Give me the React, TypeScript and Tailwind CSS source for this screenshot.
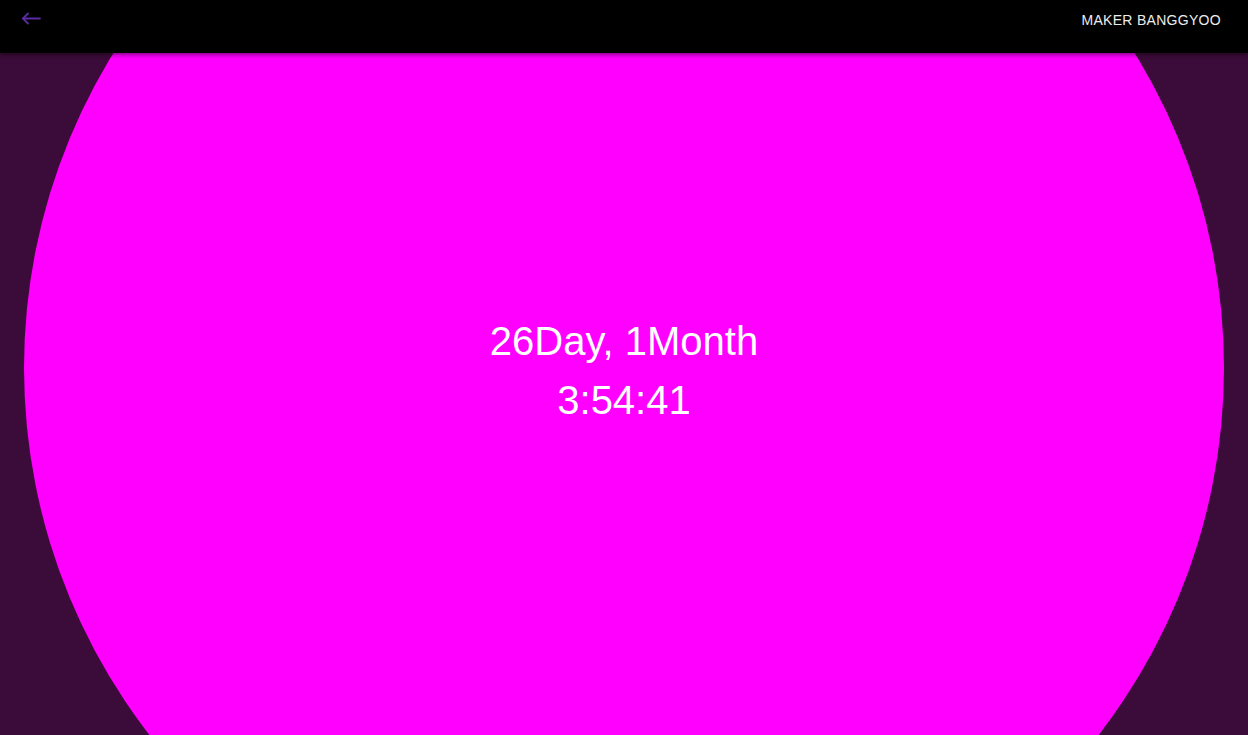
export default function App() {
  return (
    <div className="relative h-screen w-full overflow-hidden bg-[#3b0b39] font-['Liberation_Sans',Arial,sans-serif]">
      {/* App bar */}
      <header className="absolute inset-x-0 top-0 z-10 flex h-[53px] items-start justify-between bg-black pl-[21px] pr-[27px] shadow-[0_2px_4px_rgba(0,0,0,0.45)]">
        <button className="mt-[12px] text-[#5b2ca0]">
          <svg width="20" height="13" viewBox="0 0 20 13" fill="none" stroke="currentColor" strokeWidth="1.8" strokeLinecap="round" strokeLinejoin="round">
            <path d="M19 6.5H2" />
            <path d="M7 1.5 2 6.5l5 5" />
          </svg>
        </button>
        <span className="mt-[12px] text-[14px] leading-[16px] tracking-[0.3px] text-[#ececec]">MAKER BANGGYOO</span>
      </header>

      {/* Clock */}
      <div className="flex h-full w-full items-center justify-center">
        <div className="flex h-[1200px] w-[1200px] shrink-0 flex-col items-center justify-center rounded-full bg-[#ff00ff] pt-[6px] text-center text-[40px] text-white">
          <div className="leading-[59px]">26Day, 1Month</div>
          <div className="leading-[59px]">3:54:41</div>
        </div>
      </div>
    </div>
  );
}
